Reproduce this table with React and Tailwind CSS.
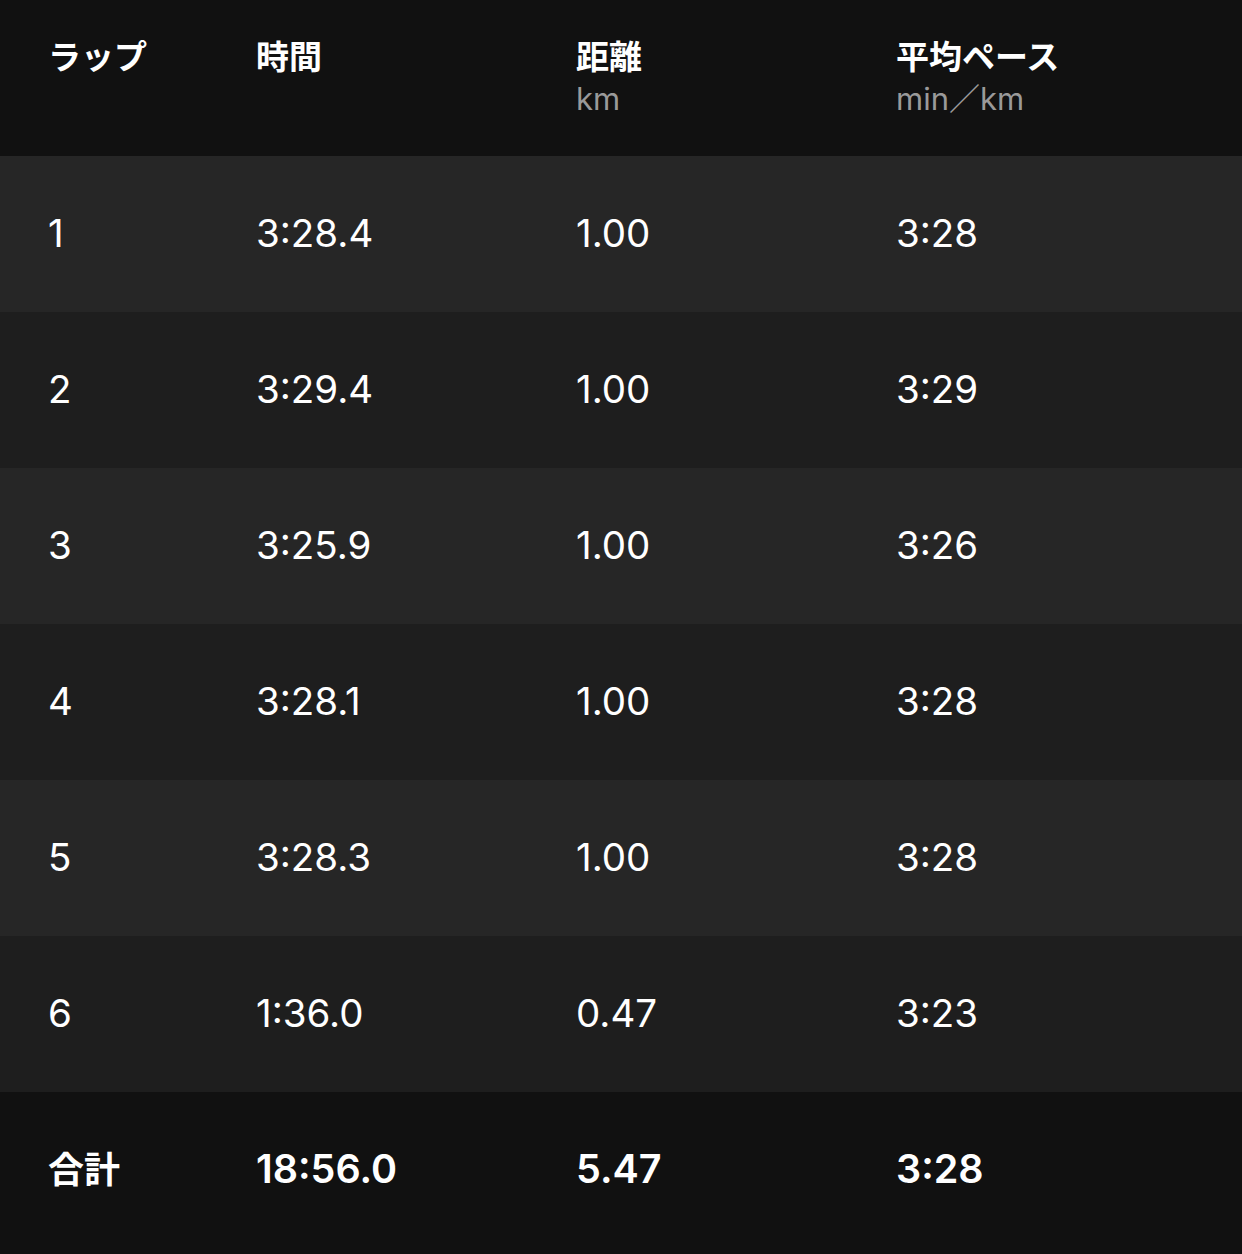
import React from "react";

const rows = [
  ["1", "3:28.4", "1.00", "3:28"],
  ["2", "3:29.4", "1.00", "3:29"],
  ["3", "3:25.9", "1.00", "3:26"],
  ["4", "3:28.1", "1.00", "3:28"],
  ["5", "3:28.3", "1.00", "3:28"],
  ["6", "1:36.0", "0.47", "3:23"],
];

const grid = "grid grid-cols-[208px_320px_320px_1fr] pl-[48px]";

export default function App() {
  return (
    <div
      className="w-[1242px] h-[1254px] bg-[#111111] text-white"
      style={{ fontFamily: 'Inter, "Noto Sans CJK JP", sans-serif' }}
    >
      <div className={`${grid} h-[156px] pt-[36px] text-[33px] leading-[42px]`}>
        <div className="font-semibold">ラップ</div>
        <div className="font-semibold">時間</div>
        <div>
          <div className="font-semibold">距離</div>
          <div className="text-[#9a9a9a] text-[31px] leading-[42px]">km</div>
        </div>
        <div>
          <div className="font-semibold">平均ペース</div>
          <div className="text-[#9a9a9a] text-[31px] leading-[42px]">min／km</div>
        </div>
      </div>
      {rows.map((r, i) => (
        <div
          key={i}
          className={`${grid} h-[156px] items-center text-[38.5px] ${
            i % 2 === 0 ? "bg-[#262626]" : "bg-[#1e1e1e]"
          }`}
        >
          {r.map((c, j) => (
            <div key={j}>{c}</div>
          ))}
        </div>
      ))}
      <div className={`${grid} h-[162px] items-center text-[39.5px] font-semibold pb-[6px]`}>
        <div className="text-[36px]">合計</div>
        <div>18:56.0</div>
        <div>5.47</div>
        <div>3:28</div>
      </div>
    </div>
  );
}
